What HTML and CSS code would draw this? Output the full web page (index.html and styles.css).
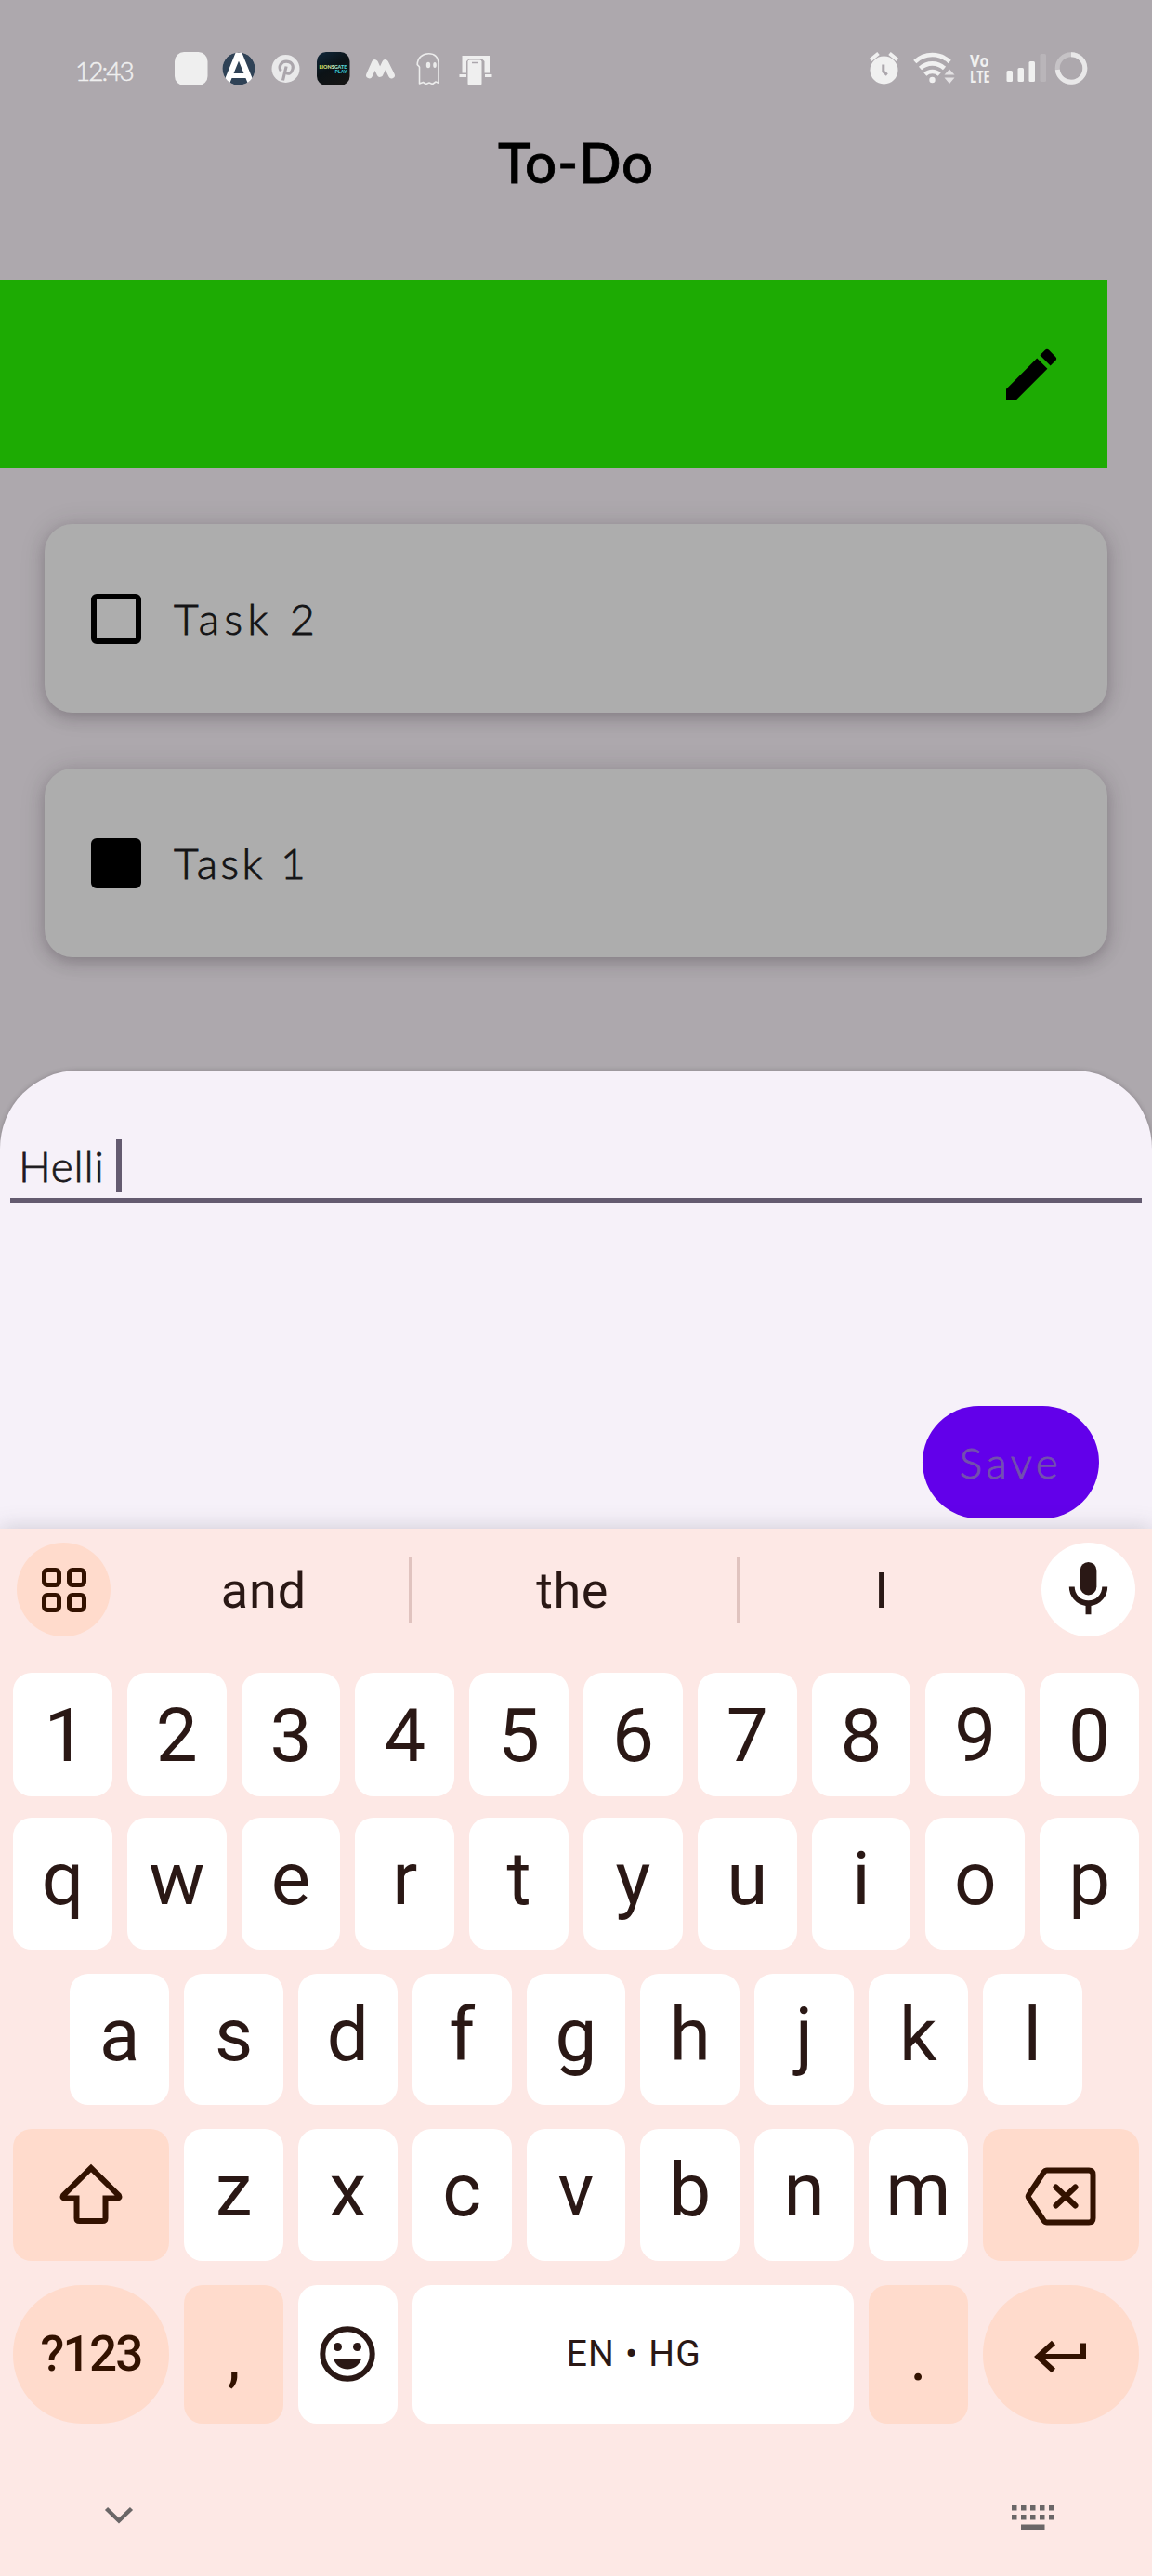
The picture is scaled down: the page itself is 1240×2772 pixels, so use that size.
FILE: index.html
```html
<!DOCTYPE html>
<html lang="en">
<head>
<meta charset="utf-8">
<title>To-Do</title>
<link rel="stylesheet" href="styles.css">
</head>
<body>
<div class="phone">
  <main class="app">
    <header class="status">
      <span class="clock">12:43</span>
      <div class="notifications">
        <svg width="36" height="36" viewBox="0 0 36 36"><rect width="35.5" height="36" rx="10" fill="#efefef"/></svg>
        <svg width="36" height="36" viewBox="0 0 36 36"><defs><clipPath id="disc"><circle cx="18" cy="18" r="17.6"/></clipPath></defs><g clip-path="url(#disc)"><circle cx="18" cy="18" r="17.6" fill="#2f4256"/><path d="M18 1 5 33M18 1l13 32" stroke="#fff" stroke-width="6.5" fill="none"/><path d="M9 25.5h18" stroke="#fff" stroke-width="5"/></g></svg>
        <svg width="36" height="36" viewBox="0 0 36 36"><circle cx="17.5" cy="18" r="15" fill="#e9e9ea"/><path d="M14.5 30.5l3.6-15M12.3 20.2c-3-5 .6-10 5.8-10s8 3.600 7 7.800-4.400 6.500-7.200 4.200" fill="none" stroke="#aba6ac" stroke-width="3.200"/></svg>
        <svg width="36" height="36" viewBox="0 0 36 36"><defs><linearGradient id="night" x2=".6" y2="1"><stop offset="0" stop-color="#10283c"/><stop offset=".55" stop-color="#0b1216"/><stop offset="1" stop-color="#141414"/></linearGradient><linearGradient id="brand"><stop offset="0" stop-color="#f1e94a"/><stop offset=".5" stop-color="#d8eec0"/><stop offset="1" stop-color="#30c8d8"/></linearGradient></defs><rect width="35.500" height="36" rx="10" fill="url(#night)"/><text class="mini" x="2.500" y="18" textLength="30" lengthAdjust="spacingAndGlyphs" fill="url(#brand)">LIONSGATE</text><text class="mini" x="19.500" y="22.500" textLength="13" lengthAdjust="spacingAndGlyphs" fill="#35c6d6">PLAY</text></svg>
        <svg width="36" height="36" viewBox="0 0 36 36"><path d="M5.500 25 11.500 11.500 17 23.500 22.700 11.500 29.500 25" fill="none" stroke="#ececec" stroke-width="6.800" stroke-linecap="round" stroke-linejoin="round"/></svg>
        <svg width="36" height="36" viewBox="0 0 36 36"><path d="M8.500 16V34l4-1.500 3 2 3.500-1.500 3.500 1.500 3.500-2.500 3 1.200V13C29 5 24.500 1.800 18.500 1.800S6.500 5.500 6.200 13.500c1 1.500 2.300 1.500 2.300 3" fill="none" stroke="#ececec" stroke-width="1.600" stroke-linejoin="round"/><ellipse cx="18" cy="14" rx="2.200" ry="3.300" fill="#ececec"/><ellipse cx="25" cy="14" rx="1.800" ry="3" fill="#ececec"/></svg>
        <svg width="36" height="36" viewBox="0 0 36 36"><path d="M3.500 4H33v18.500h-5.500V10l-3-3H11l-3 3v12.500H3.500z" fill="#efefef"/><path d="M.5 24H8v3H.5zM28 24h7.500v3H28z" fill="#efefef"/><rect x="9.500" y="8.500" width="15" height="27.500" rx="2" fill="#efefef"/><path d="M14 11.500h6" stroke="#aba6ac" stroke-width="1.500"/></svg>
      </div>
      <div class="system">
        <svg width="34" height="36" viewBox="0 0 34 36"><circle cx="16.500" cy="19.500" r="15" fill="#f0f0f0"/><path d="M2 8.500 10.500 1.500M31 8.500 22.500 1.500" stroke="#f0f0f0" stroke-width="4"/><path d="M15.800 13.500v7.500l4 3.500" stroke="#aba6ac" stroke-width="3" fill="none"/></svg>
        <svg width="46" height="36" viewBox="0 0 46 36"><g fill="none" stroke="#f0f0f0" stroke-width="4.600"><path d="M1.800 10.500a27 27 0 0 1 37.400 0"/><path d="M7.500 17.500a19 19 0 0 1 26 0"/><path d="M12.800 24a11.500 11.500 0 0 1 15.400 0"/></g><circle cx="20.500" cy="30" r="3.200" fill="#f0f0f0"/><path d="M33.500 24.500 39 18.500l5.500 6zM33.500 27.500h11L39 34z" fill="#e3e1e3"/></svg>
        <svg class="network" width="24" height="36" viewBox="0 0 24 36"><text class="volte" x="1" y="15.700" textLength="20.500" lengthAdjust="spacingAndGlyphs">Vo</text><text class="volte" x="1" y="33" textLength="21.500" lengthAdjust="spacingAndGlyphs">LTE</text></svg>
        <svg width="44" height="36" viewBox="0 0 44 36"><g fill="#f0f0f0"><rect x=".5" y="20" width="6.500" height="12" rx="1.500"/><rect x="12.500" y="17" width="6.500" height="15" rx="1.500"/><rect x="24.500" y="10" width="6.500" height="22" rx="1.500"/></g><rect x="36.500" y="2" width="6.500" height="30" rx="1.500" fill="#b9b5b9"/></svg>
        <svg class="battery" width="36" height="36" viewBox="0 0 36 36"><circle cx="18" cy="17.500" r="14.800" fill="none" stroke="#c6c3c6" stroke-width="5"/><path d="M18 2.700A14.800 14.800 0 1 1 3.300 19" fill="none" stroke="#e9e8e9" stroke-width="5"/></svg>
      </div>
    </header>
    <h1 class="title">To-Do</h1>
    <section class="tasks">
      <div class="swipe">
        <svg width="72" height="72" viewBox="0 0 24 24"><path d="M3 17.250V21h3.750L17.810 9.940l-3.750-3.750L3 17.250zM20.710 7.040a1 1 0 0 0 0-1.410l-2.340-2.340a1 1 0 0 0-1.410 0l-1.830 1.830 3.750 3.750 1.830-1.830z"/></svg>
      </div>
      <label class="card"><span class="box"></span><span class="task">Task 2</span></label>
      <label class="card"><span class="box box-on"></span><span class="task task-last">Task 1</span></label>
    </section>
  </main>

  <section class="sheet">
    <div class="field"><span class="value">Helli</span><span class="caret"></span></div>
    <button class="save">Save</button>
  </section>

  <section class="keyboard">
    <div class="suggestions">
      <div class="round apps"><svg width="50" height="50" viewBox="0 0 50 50"><g fill="none" stroke="#331200" stroke-width="5"><rect x="3.500" y="3.500" width="16" height="16" rx="3.500"/><rect x="30.500" y="3.500" width="16" height="16" rx="3.500"/><rect x="3.500" y="30.500" width="16" height="16" rx="3.500"/><rect x="30.500" y="30.500" width="16" height="16" rx="3.500"/></g></svg></div>
      <span class="word word-a">and</span><i class="rule"></i><span class="word word-b">the</span><i class="rule"></i><span class="word word-c">I</span>
      <div class="round mic"><svg width="71" height="71" viewBox="0 0 24 24" fill="#2a1815"><path d="M12 14a3 3 0 0 0 3-3V5a3 3 0 0 0-6 0v6a3 3 0 0 0 3 3z"/><path d="M17 11a5 5 0 0 1-10 0H5a7 7 0 0 0 6 6.920V21h2v-3.080A7 7 0 0 0 19 11z"/></svg></div>
    </div>
    <div class="keys">
      <div class="row digits"><b>1</b><b>2</b><b>3</b><b>4</b><b>5</b><b>6</b><b>7</b><b>8</b><b>9</b><b>0</b></div>
      <div class="row"><b>q</b><b>w</b><b>e</b><b>r</b><b>t</b><b>y</b><b>u</b><b>i</b><b>o</b><b>p</b></div>
      <div class="row"><b>a</b><b>s</b><b>d</b><b>f</b><b>g</b><b>h</b><b>j</b><b>k</b><b>l</b></div>
      <div class="row">
        <b class="wide tint icon"><svg width="70" height="70" viewBox="0 0 70 70"><path d="M35 6 5 35.500q-1.500 3 1.500 3H19.500V60q0 3 3 3h25q3 0 3-3V38.500H63.500q3 0 1.500-3z" fill="none" stroke="#331200" stroke-width="6"/></svg></b>
        <b>z</b><b>x</b><b>c</b><b>v</b><b>b</b><b>n</b><b>m</b>
        <b class="wide tint icon"><svg width="78" height="66" viewBox="0 0 78 66"><path d="M24 6.500H69q4.500 0 4.500 4.500V58q0 4.500-4.500 4.500H24q-2 0-3.500-2L4.500 36.500q-1.500-2 0-4L20.500 8.500q1.500-2 3.500-2z" fill="none" stroke="#331200" stroke-width="6"/><path d="M33.500 24.500 54.500 44.500M54.500 24.500 33.500 44.500" stroke="#331200" stroke-width="6" stroke-linecap="round"/></svg></b>
      </div>
      <div class="row last">
        <b class="wide tint pill mode">?123</b>
        <b class="tint comma">,</b>
        <b class="icon"><svg width="60" height="60" viewBox="0 0 60 60"><circle cx="30" cy="30" r="26.700" fill="none" stroke="#2a1815" stroke-width="6"/><circle cx="19.500" cy="22.500" r="4.500" fill="#2a1815"/><circle cx="40.500" cy="22.500" r="4.500" fill="#2a1815"/><path d="M15 35.500h30c-2.500 7-8 11-15 11s-12.500-4-15-11z" fill="#2a1815"/></svg></b>
        <b class="space">EN • HG</b>
        <b class="tint dot">.</b>
        <b class="wide tint pill icon enter"><svg width="60" height="40" viewBox="0 0 60 40"><path d="M54 5.500V20H6M22 5 5.500 20 22 35" fill="none" stroke="#331200" stroke-width="6"/></svg></b>
      </div>
    </div>
    <nav class="navbar">
      <svg width="32" height="22" viewBox="0 0 32 22"><path d="M2.500 3.500 16 16.500 29.500 3.500" fill="none" stroke="#6a6667" stroke-width="4.500"/></svg>
      <svg width="46" height="27" viewBox="0 0 46 27" fill="#6a6667"><path d="M0 0h5.500v5.500H0zM10 0h5.500v5.500H10zM20 0h5.500v5.500H20zM30 0h5.500v5.500H30zM40 0h5.500v5.500H40zM0 10h5.500v5.500H0zM10 10h5.500v5.500H10zM20 10h5.500v5.500H20zM30 10h5.500v5.500H30zM40 10h5.500v5.500H40zM10 20.500h25.500V26H10z"/></svg>
    </nav>
  </section>
</div>
</body>
</html>
```
FILE: styles.css
```css
* { box-sizing: border-box; }
body { margin: 0; background: #ada8ad; font-family: Lato, "Liberation Sans", sans-serif; }
svg { display: block; flex: none; overflow: visible; }
.phone { width: 1240px; height: 2772px; display: flex; flex-direction: column; overflow: hidden; }

.app { height: 1152px; }
.status { height: 110px; padding: 38px 67px 0 81px; display: flex; align-items: center; }
.clock { width: 107px; padding-top: 3px; font-size: 28px; font-weight: 300; line-height: 34px; letter-spacing: -2px; color: #efefef; -webkit-text-stroke: .5px; }
.notifications { display: flex; gap: 15px; }
.system { display: flex; align-items: center; margin-left: auto; gap: 14px; }
.network { margin-right: 2px; }
.battery { margin-left: -6px; margin-right: 2px; }
.mini { font: 900 5.500px Lato, sans-serif; }
.volte { font: 700 18.500px "Open Sans", sans-serif; fill: #f0f0f0; }
.title { margin: 0; height: 126px; line-height: 128px; text-align: center; font-size: 60px; font-weight: 500; letter-spacing: .8px; -webkit-text-stroke: .8px; }

.tasks { padding-top: 65px; display: flex; flex-direction: column; gap: 60px; }
.swipe { width: 1192px; height: 203px; padding-right: 46px; display: flex; align-items: center; justify-content: flex-end; background: #1dab03; }
.card { margin: 0 48px; height: 203px; padding-left: 50px; display: flex; align-items: center; gap: 35px; border-radius: 30px; background: #adadad; box-shadow: 0 5px 16px rgba(60, 50, 60, .3), 0 1px 30px rgba(60, 50, 60, .1); }
.box { width: 54px; height: 54px; border: 6px solid #000; border-radius: 6px; }
.box-on { background: #000; }
.task { font-size: 46px; font-weight: 300; line-height: 56px; letter-spacing: 5.500px; color: #141416; -webkit-text-stroke: .9px; }
.task-last { letter-spacing: 3.500px; }

.sheet { height: 493px; padding: 74px 11px 0; border-radius: 84px 84px 0 0; background: #f6f1f9; box-shadow: 0 0 5px rgba(60, 50, 60, .3); display: flex; flex-direction: column; }
.field { height: 69px; padding-left: 9px; display: flex; border-bottom: 6px solid #645b70; }
.value { width: 105px; font-size: 46px; font-weight: 300; line-height: 57px; letter-spacing: .8px; color: #1c1a20; -webkit-text-stroke: .8px; }
.caret { width: 6px; height: 57px; background: #645b70; }
.save { width: 190px; height: 121px; margin: 218px 46px 0 auto; padding: 0; border: 0; border-radius: 61px; background: #6200ea; color: #7350ae; font: 300 46px Lato, sans-serif; letter-spacing: 4.500px; -webkit-text-stroke: .9px; }

.keyboard { height: 1127px; background: #fde8e5; box-shadow: 0 0 22px rgba(80, 80, 100, .25); color: #2a1815; font-family: Roboto, sans-serif; }
.suggestions { height: 155px; padding: 15px 18px 0; display: flex; align-items: flex-start; }
.round { width: 101px; height: 101px; border-radius: 50%; display: flex; align-items: center; justify-content: center; }
.apps { background: #ffdbcc; }
.mic { background: #fff; }
.word { line-height: 103px; font-size: 54px; text-align: center; }
.word-a { width: 321px; padding-left: 9px; letter-spacing: 1px; }
.word-b { width: 350px; padding-right: 4px; letter-spacing: .5px; }
.word-c { flex: 1; padding-right: 20px; }
.rule { width: 3px; height: 71px; margin-top: 15px; background: #e0c3bf; }
.keys { padding: 0 14px; display: flex; flex-direction: column; gap: 26px; }
.row { display: flex; justify-content: center; gap: 16px; height: 141.500px; }
.row b { width: 106.800px; padding-bottom: 9px; display: flex; align-items: center; justify-content: center; border-radius: 20px; background: #fff; font-size: 80px; font-weight: 400; line-height: 1; }
.digits { height: 133px; margin-bottom: -3px; }
.row.digits b { padding: 3px 0 0; }
.row.digits b:first-child { padding-left: 5px; }
.last { height: 149px; }
.row .wide { width: 168.200px; }
.row .tint { background: #ffdbcc; color: #331200; }
.row .icon { padding: 0; }
.row .pill { border-radius: 74px; }
.row .mode { font-size: 53px; font-weight: 500; padding: 0; letter-spacing: -1.800px; }
.row .space { flex: 1; padding: 0 0 0 2px; font-size: 39px; letter-spacing: 1.200px; }
.row .comma, .row .dot { font-size: 70px; padding: 8px 0 0; }
.row .enter { padding-top: 5px; }
.navbar { height: 160px; padding: 88px 105px 0 112px; display: flex; justify-content: space-between; align-items: flex-start; }
```
